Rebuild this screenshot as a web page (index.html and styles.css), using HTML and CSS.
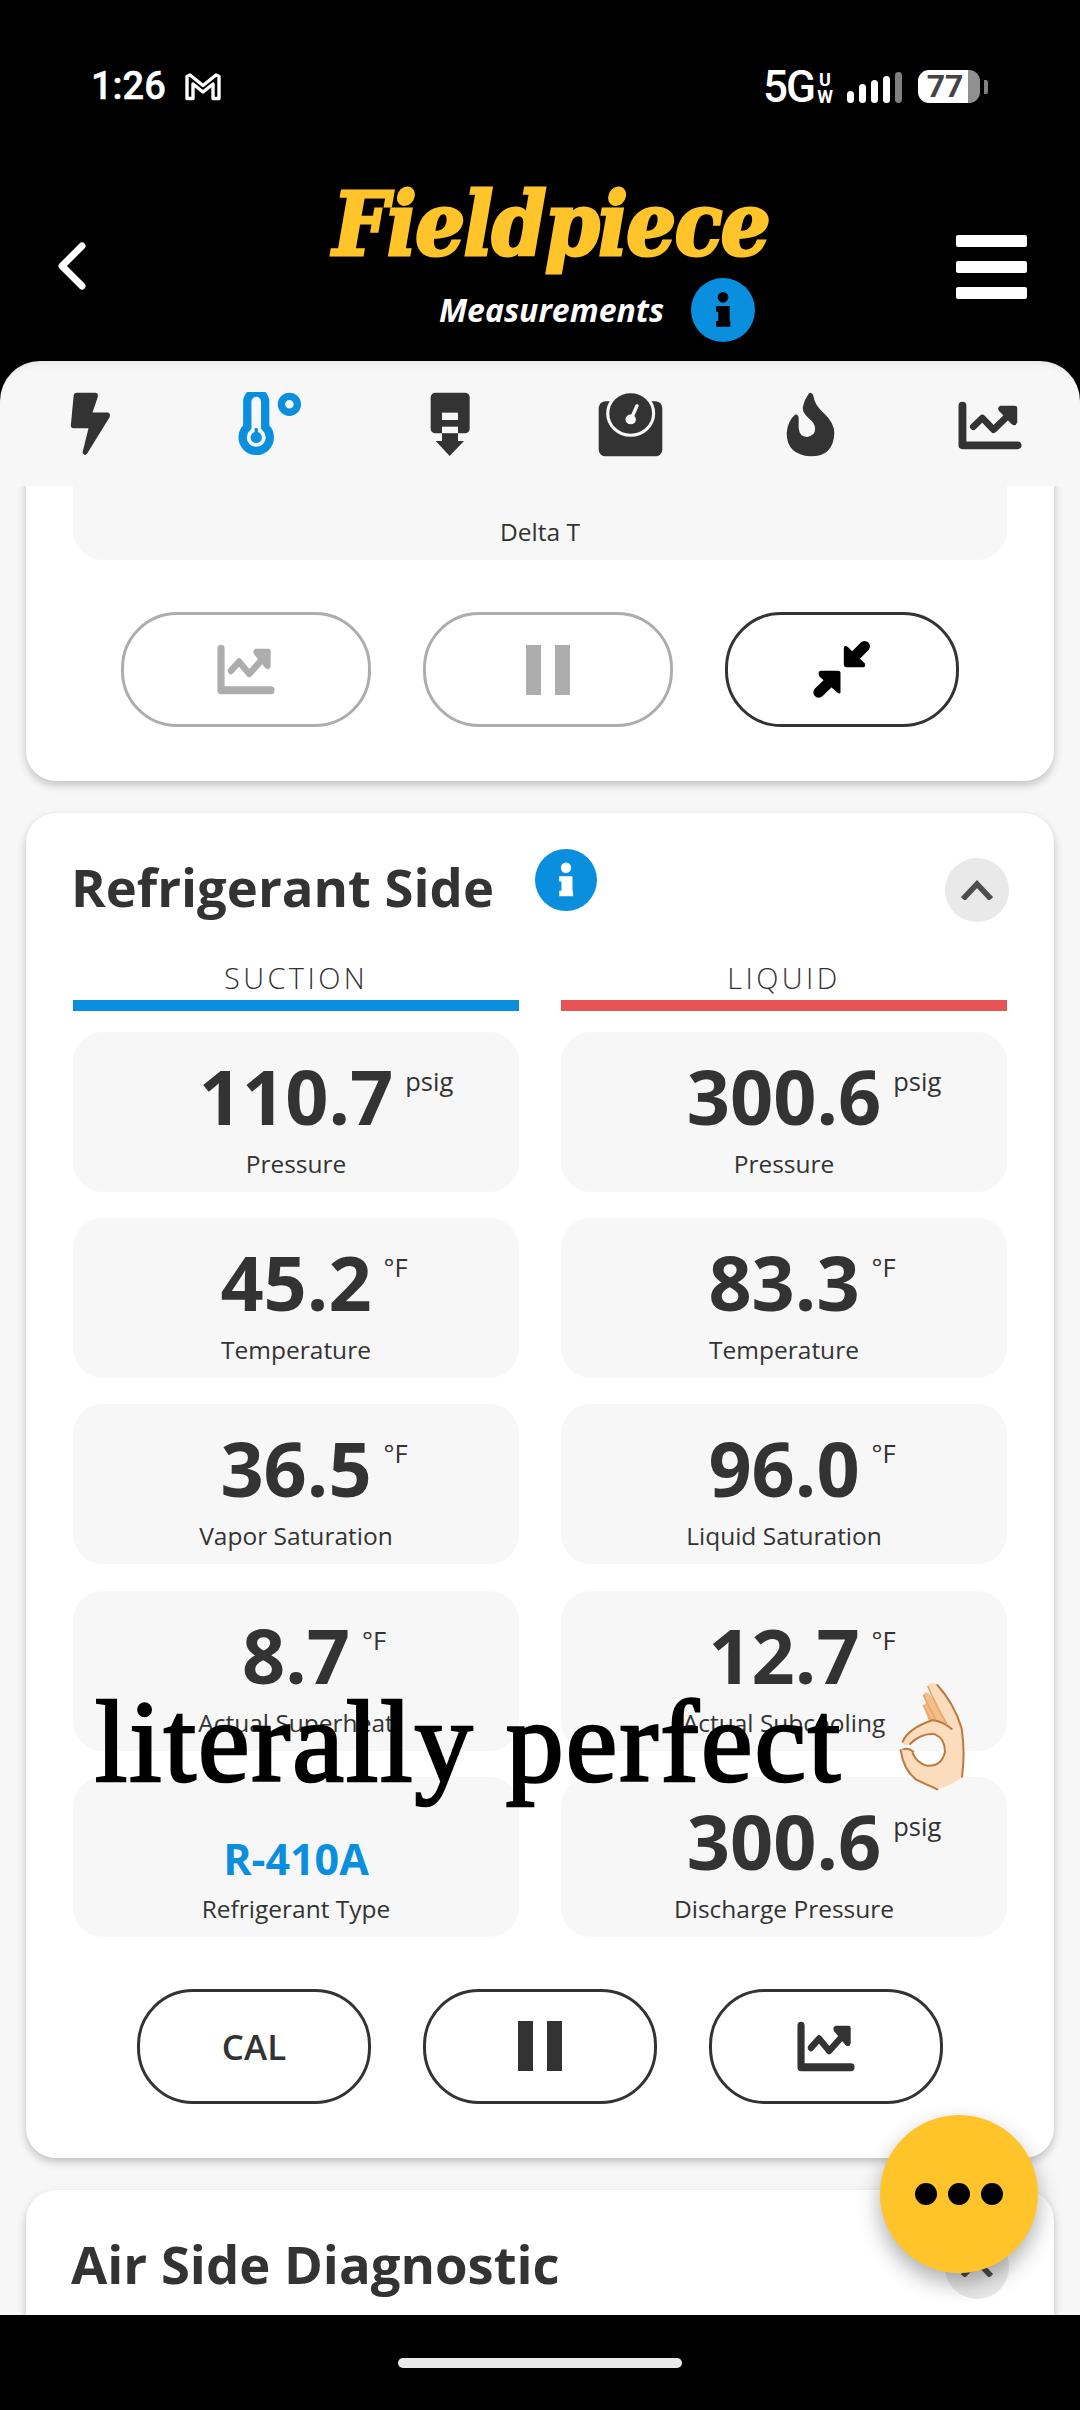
FILE: index.html
```html
<!DOCTYPE html>
<html lang="en">
<head>
<meta charset="utf-8">
<title>Fieldpiece Measurements</title>
<link rel="stylesheet" href="styles.css">
</head>
<body>
<svg class="defs" aria-hidden="true">
  <symbol id="i-info" viewBox="-96 -96 192 192">
    <circle r="96" fill="#0a8fdf"/>
    <circle cy="-38" r="16" fill="currentColor"/>
    <path fill="currentColor" d="M-21 -12H20V33H22V50H-21V33H-14V5H-21Z"/>
  </symbol>
  <symbol id="i-chart" viewBox="1212 86 187 147" preserveAspectRatio="none">
    <path fill="none" stroke="currentColor" stroke-width="23" stroke-linejoin="round" stroke-linecap="round" d="M1225 100V219H1386"/>
    <path fill="none" stroke="currentColor" stroke-width="20" stroke-linejoin="round" stroke-linecap="round" d="M1257 163L1283 137L1316 172L1368 120"/>
    <path fill="currentColor" d="M1336 100H1378Q1385 100 1385 107V150Q1380 165 1368 155L1332 116Q1325 105 1336 100Z"/>
  </symbol>
  <symbol id="i-chevron" viewBox="0 0 32 20">
    <path fill="none" stroke="currentColor" stroke-width="5.5" d="M2 19L16 4L30 19"/>
  </symbol>
</svg>

<div class="app">
  <header class="top">
    <div class="status">
      <div class="status-left">
        <span class="time">1:26</span>
        <svg class="gmail" viewBox="0 0 36 28"><path fill="none" stroke="#fff" stroke-width="3.4" stroke-linejoin="round" d="M2 3.5V25.5H8V11L18 19L28 11V25.5H34V3.5L31 2L18 12.5L5 2Z"/></svg>
      </div>
      <div class="status-right">
        <span class="net">5G</span>
        <span class="uw"><span>U</span><span>W</span></span>
        <span class="signal">
          <i class="b1"></i><i class="b2"></i><i class="b3"></i><i class="b4"></i><i class="b5"></i>
        </span>
        <span class="battery"><span class="level">77</span><span class="rest"></span></span>
        <span class="nub"></span>
      </div>
    </div>
    <div class="brandbar">
      <svg class="back" viewBox="0 0 28 48"><path fill="none" stroke="#fff" stroke-width="7" stroke-linecap="round" stroke-linejoin="round" d="M24 4L4 24L24 44"/></svg>
      <div class="brand">
        <div class="logo">Fieldpiece</div>
        <div class="subtitle">
          <span class="subtitle-text">Measurements</span>
          <svg class="info info-top"><use href="#i-info"/></svg>
        </div>
      </div>
      <div class="burger"><i></i><i></i><i></i></div>
    </div>
  </header>

  <nav class="tabs">
    <svg class="ti ti-bolt" viewBox="85 63 122 193"><path fill="#333" d="M105 65H160Q170 65 168 78L152 125H198Q208 127 203 140L135 250Q125 258 122 245L140 172H95Q85 172 87 160L95 75Q96 65 105 65Z"/></svg>
    <svg class="ti ti-thermo" viewBox="592 63 193 193">
      <path fill="none" stroke="#0a8fdf" stroke-width="25" d="M620 169V92A27 27 0 0 1 674 92V169A41 41 0 1 1 620 169Z"/>
      <circle cx="647" cy="200" r="17" fill="#0a8fdf"/><rect x="642" y="172" width="10" height="28" fill="#0a8fdf"/>
      <circle cx="747" cy="100" r="24" fill="none" stroke="#0a8fdf" stroke-width="22"/>
    </svg>
    <svg class="ti ti-doc" viewBox="88 63 120 195">
      <rect x="90" y="65" width="117" height="122" rx="14" fill="#333"/>
      <rect x="124" y="125" width="48" height="22" fill="#f7f7f7"/>
      <rect x="124" y="167" width="48" height="20" fill="#f7f7f7"/>
      <path fill="#333" d="M124 187H172V210H190L147 255L105 210H124Z"/>
    </svg>
    <svg class="ti ti-gauge" viewBox="166 60 187 197" preserveAspectRatio="none">
      <rect x="168" y="88" width="183" height="167" rx="20" fill="#333"/>
      <circle cx="260" cy="125" r="66" fill="#333" stroke="#f7f7f7" stroke-width="9"/>
      <path fill="none" stroke="#f7f7f7" stroke-width="10" stroke-linecap="round" d="M262 140L278 102"/>
      <circle cx="260" cy="143" r="15" fill="#f7f7f7"/>
    </svg>
    <svg class="ti ti-flame" viewBox="711 63 143 194" preserveAspectRatio="none"><path fill="#333" d="M778 67Q790 62 792 80Q795 100 820 125Q852 155 852 185Q850 255 783 255Q713 250 713 185Q715 150 738 130Q748 130 748 142V170Q750 197 772 197Q796 195 796 172Q795 155 778 142Q758 125 760 108Q765 85 778 67Z"/></svg>
    <svg class="ti ti-chart"><use href="#i-chart"/></svg>
  </nav>

  <main class="scroll">
    <section class="card card-first">
      <div class="cell"><div class="label label-only">Delta T</div></div>
      <div class="actions">
        <button class="btn btn-wide btn-off"><svg class="chart"><use href="#i-chart"/></svg></button>
        <button class="btn btn-wide btn-off"><span class="pause"><i></i><i></i></span></button>
        <button class="btn btn-narrow">
          <svg class="compress" viewBox="90 58 185 185">
            <path d="M205 125L250 80M160 172L113 217" stroke="#000" stroke-width="32" stroke-linecap="round" fill="none"/>
            <path d="M188 85Q190 75 200 82L250 130Q255 142 245 142H195Q188 142 188 135Z"/>
            <path d="M178 218Q176 225 165 215L115 170Q108 155 120 153H170Q178 153 178 160Z"/>
          </svg>
        </button>
      </div>
    </section>

    <section class="card">
      <div class="card-head">
        <h2 class="title">Refrigerant Side</h2>
        <svg class="info info-card"><use href="#i-info"/></svg>
        <span class="collapse"><svg class="chev"><use href="#i-chevron"/></svg></span>
      </div>

      <div class="grid">
        <div class="col-head"><div class="col-name">SUCTION</div><div class="bar bar-blue"></div></div>
        <div class="col-head"><div class="col-name">LIQUID</div><div class="bar bar-red"></div></div>

        <div class="cell"><div class="value"><span class="num">110.7<span class="unit">psig</span></span></div><div class="label">Pressure</div></div>
        <div class="cell"><div class="value"><span class="num">300.6<span class="unit">psig</span></span></div><div class="label">Pressure</div></div>

        <div class="cell"><div class="value"><span class="num">45.2<span class="unit">°F</span></span></div><div class="label">Temperature</div></div>
        <div class="cell"><div class="value"><span class="num">83.3<span class="unit">°F</span></span></div><div class="label">Temperature</div></div>

        <div class="cell"><div class="value"><span class="num">36.5<span class="unit">°F</span></span></div><div class="label">Vapor Saturation</div></div>
        <div class="cell"><div class="value"><span class="num">96.0<span class="unit">°F</span></span></div><div class="label">Liquid Saturation</div></div>

        <div class="cell"><div class="value"><span class="num">8.7<span class="unit">°F</span></span></div><div class="label">Actual Superheat</div></div>
        <div class="cell"><div class="value"><span class="num">12.7<span class="unit">°F</span></span></div><div class="label">Actual Subcooling</div></div>

        <div class="cell"><div class="value value-text">R-410A</div><div class="label">Refrigerant Type</div></div>
        <div class="cell"><div class="value"><span class="num">300.6<span class="unit">psig</span></span></div><div class="label">Discharge Pressure</div></div>
      </div>

      <div class="actions">
        <button class="btn btn-narrow btn-cal">CAL</button>
        <button class="btn btn-narrow"><span class="pause"><i></i><i></i></span></button>
        <button class="btn btn-narrow"><svg class="chart"><use href="#i-chart"/></svg></button>
      </div>
    </section>

    <section class="card">
      <div class="card-head">
        <h2 class="title">Air Side Diagnostic</h2>
        <span class="collapse"><svg class="chev"><use href="#i-chevron"/></svg></span>
      </div>
    </section>
  </main>

  <footer class="navbar"><span class="home"></span></footer>

  <div class="caption">
    <span class="caption-text">literally perfect</span>
    <svg class="okhand" viewBox="0 0 360 420">
      <path fill="#f2bd88" d="M190 75Q200 55 220 90L262 165L228 150Q205 110 190 75Z"/>
      <path fill="#f2bd88" d="M190 105Q200 90 215 115L240 155L205 150Z"/>
      <path fill="#fbdcbc" fill-rule="evenodd" d="M203 48Q215 30 232 45Q282 100 305 175Q316 250 306 322Q270 348 232 358Q170 335 150 310Q125 280 122 240Q140 232 160 245Q170 275 200 287Q245 290 255 245Q255 205 225 193Q185 190 150 222Q130 232 127 215Q145 175 215 150Q240 150 262 165Q225 100 203 48Z"/>
      <path fill="none" stroke="#bd7a3e" stroke-width="6" stroke-linecap="round" d="M232 45Q282 100 305 175Q316 250 306 320M128 215Q145 175 218 150Q250 155 275 177M150 222Q185 188 225 193Q255 205 255 245Q245 290 200 287Q170 278 158 250M122 240Q130 300 170 330L232 358M130 238Q145 232 160 245"/>
      <path fill="none" stroke="#e9a565" stroke-width="5" d="M203 48Q225 100 262 165M190 75Q205 110 228 150M190 105L212 150"/>
    </svg>
  </div>

  <button class="fab"><i></i><i></i><i></i></button>
</div>
</body>
</html>
```
FILE: styles.css
```css
* { box-sizing: border-box; }
html, body { margin: 0; padding: 0; }
body { font-family: "Open Sans", "Noto Sans", sans-serif; color: #333; }
.defs { position: absolute; width: 0; height: 0; }

.app {
  position: relative;
  width: 1080px;
  height: 2410px;
  background: #000;
  display: flex;
  flex-direction: column;
  overflow: hidden;
}

/* Header */
.top { height: 361px; flex: none; color: #fff; }
.status {
  height: 120px;
  padding: 70px 92px 0;
  display: flex;
  justify-content: space-between;
  align-items: flex-start;
  font-family: Roboto, sans-serif;
}
.status-left { display: flex; align-items: center; gap: 19px; height: 33px; }
.time { font-size: 38px; font-weight: 500; line-height: 33px; margin-left: -1px; -webkit-text-stroke: .5px #fff; }
.gmail { width: 36px; height: 28px; }
.status-right { display: flex; align-items: center; height: 33px; }
.net { font-size: 44px; font-weight: 500; letter-spacing: -2px; line-height: 33px; width: 52px; margin-top: 2px; }
.uw { display: flex; flex-direction: column; font-size: 18px; font-weight: 700; line-height: 17px; width: 32px; align-items: center; margin-top: 2px; padding-right: 12px; }
.signal { display: flex; gap: 5px; align-items: flex-end; height: 31px; margin-top: 2px; }
.signal i { width: 7px; background: #fff; border-radius: 4px; display: block; }
.signal .b1 { height: 12px; }
.signal .b2 { height: 19px; }
.signal .b3 { height: 23px; }
.signal .b4 { height: 27px; }
.signal .b5 { height: 31px; background: #808080; }
.battery {
  margin-left: 16px;
  width: 62px;
  height: 33px;
  display: flex;
}
.level { width: 50px; text-align: center; color: #444; background: #fff; border-radius: 11px 0 0 11px; font-size: 32px; font-weight: 700; line-height: 33px; padding-left: 4px; }
.rest { flex: 1; background: #909090; border-radius: 0 11px 11px 0; }
.nub { width: 4px; height: 14px; background: #808080; margin-left: 4px; border-radius: 0 2px 2px 0; }

.brandbar {
  height: 241px;
  padding: 52px 53px 0 58px;
  display: flex;
  align-items: flex-start;
}
.back { width: 28px; height: 48px; flex: none; margin-top: 70px; }
.brand { flex: 1; padding-left: 60px; display: flex; flex-direction: column; align-items: center; }
.logo {
  font-family: "DejaVu Serif", serif;
  font-stretch: condensed;
  font-weight: 700;
  font-style: italic;
  font-size: 87px;
  line-height: 90px;
  letter-spacing: -1.5px;
  color: #ffc429;
  margin-top: 8px;
  white-space: nowrap;
  -webkit-text-stroke: 3px #ffc429;
}
.subtitle { display: flex; align-items: center; gap: 27px; margin-left: 92px; margin-top: 8px; }
.subtitle-text { font-size: 32px; font-weight: 700; font-style: italic; color: #fff; line-height: 64px; }
.info { display: block; flex: none; }
.info-top { width: 64px; height: 64px; color: #000; }
.burger { width: 71px; margin-top: 63px; display: flex; flex-direction: column; gap: 14px; flex: none; }
.burger i { display: block; height: 12px; background: #fff; border-radius: 2px; }

/* Tabs */
.tabs {
  flex: none;
  height: 125px;
  padding-top: 31px;
  background: #f7f7f7;
  border-radius: 40px 40px 0 0;
  box-shadow: inset 0 9px 8px -7px rgba(0,0,0,.08);
  display: grid;
  grid-template-columns: repeat(6, 180px);
  justify-items: center;
  align-items: start;
}
.ti { display: block; height: 64px; }
.ti-bolt { width: 41px; }
.ti-thermo { width: 64px; }
.ti-doc { width: 40px; height: 65px; }
.ti-gauge { width: 65px; height: 65px; }
.ti-flame { width: 49px; height: 65px; }
.ti-chart { width: 64px; height: 49px; margin-top: 9px; color: #333; }

/* Scroll area */
.scroll {
  flex: 1;
  min-height: 0;
  overflow: hidden;
  background: #f7f7f7;
  padding: 0 26px;
  display: flex;
  flex-direction: column;
  gap: 32px;
}
.card {
  flex: none;
  background: #fff;
  border-radius: 30px;
  padding: 0 47px 54px;
  box-shadow: 0 4px 9px rgba(0,0,0,.22);
}
.card-first { margin-top: -132px; padding-top: 46px; }

.card-head { position: relative; height: 146px; padding-top: 39px; display: flex; align-items: flex-start; }
.title { margin: 0 0 0 -2px; font-size: 52.6px; font-weight: 700; line-height: 70px; color: #333; white-space: nowrap; }
.info-card { width: 62px; height: 62px; color: #fff; margin-left: 41px; margin-top: -3px; }
.collapse {
  margin-left: auto;
  margin-right: -2px;
  margin-top: 6px;
  width: 64px;
  height: 64px;
  border-radius: 50%;
  background: #e9e9e9;
  color: #4d4d4d;
  display: flex;
  align-items: center;
  justify-content: center;
  flex: none;
}
.chev { width: 32px; height: 20px; display: block; }

.grid { display: grid; grid-template-columns: 446px 446px; column-gap: 42px; row-gap: 26.2px; }
.col-head { margin-bottom: -5.2px; }
.col-name { text-align: center; font-size: 29px; font-weight: 300; line-height: 38px; letter-spacing: 3.4px; color: #333; margin-bottom: 3px; }
.bar { height: 11px; }
.bar-blue { background: #0a8fdf; }
.bar-red { background: #e85454; }

.cell { height: 160px; background: #f7f7f7; border-radius: 30px; padding-top: 24px; text-align: center; }
.value { height: 80px; line-height: 80px; font-size: 75.6px; font-weight: 700; color: #333; }
.num { position: relative; display: inline-block; }
.unit { position: absolute; left: 100%; top: -15px; margin-left: 12px; font-size: 25.5px; font-weight: 500; color: #333; white-space: nowrap; }
.value-text { font-size: 43px; line-height: 46px; padding-top: 35px; color: #0a8fdf; }
.label { margin-top: 13px; font-size: 24.5px; font-weight: 500; line-height: 30px; color: #333; }
.label-only { margin-top: 93px; }

.actions { display: flex; justify-content: center; gap: 52px; margin-top: 52px; }
.btn {
  height: 115px;
  border: 3px solid #333;
  border-radius: 56px;
  background: #fff;
  color: #333;
  display: flex;
  align-items: center;
  justify-content: center;
  padding: 0;
  font-family: inherit;
}
.btn-wide { width: 250px; }
.btn-narrow { width: 234px; }
.btn-off { border-color: #adadad; color: #adadad; }
.btn-cal { font-size: 35px; font-weight: 600; }
.chart { width: 58px; height: 51px; display: block; }
.pause { display: flex; gap: 14px; }
.pause i { display: block; width: 15px; height: 50px; background: currentColor; }
.compress { width: 62px; height: 62px; display: block; }

/* Bottom bar */
.navbar { flex: none; height: 95px; background: #000; display: flex; align-items: center; justify-content: center; }
.home { width: 284px; height: 10px; background: #e9e9e9; border-radius: 5px; display: block; }

/* Overlays */
.caption {
  position: absolute;
  left: 95px;
  top: 1672px;
  display: flex;
  align-items: flex-start;
}
.caption-text {
  font-family: "Liberation Serif", serif;
  font-size: 116px;
  line-height: 140px;
  letter-spacing: 2.1px;
  color: #000;
  white-space: nowrap;
  -webkit-text-stroke: 2.6px #000;
}
.okhand { position: absolute; left: 765px; top: -2px; width: 120px; height: 140px; }

.fab {
  position: absolute;
  left: 880px;
  top: 2115px;
  width: 158px;
  height: 158px;
  border: 0;
  padding: 0;
  border-radius: 50%;
  background: #ffc429;
  box-shadow: 0 10px 22px rgba(0,0,0,.32);
  display: flex;
  align-items: center;
  justify-content: center;
  gap: 11px;
}
.fab i { display: block; width: 22px; height: 22px; border-radius: 50%; background: #000; }
```
